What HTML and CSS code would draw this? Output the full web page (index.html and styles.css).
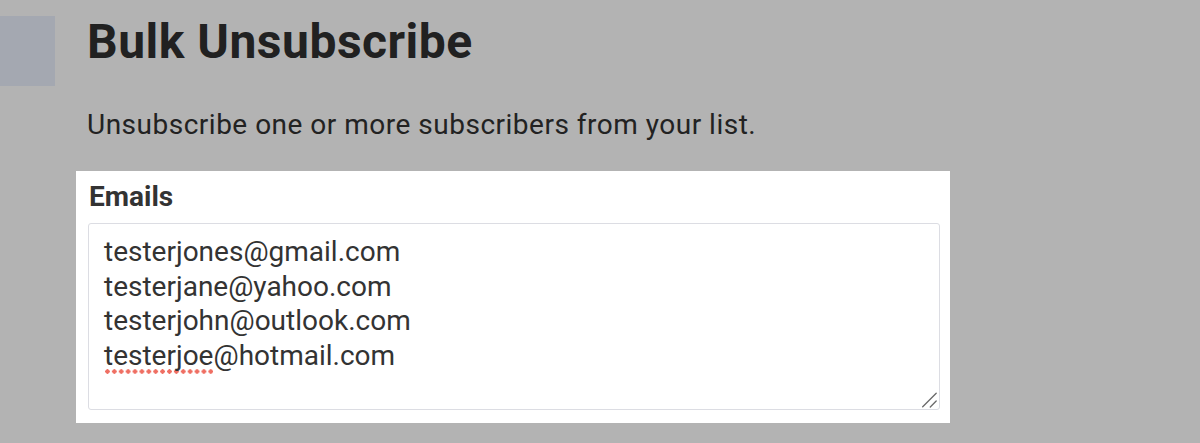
FILE: index.html
```html
<!DOCTYPE html>
<html>
<head>
<meta charset="utf-8">
<link rel="stylesheet" href="styles.css">
</head>
<body>
<div class="page">
  <div class="side"><div class="side-block"></div></div>
  <div class="main">
    <h1 class="title">Bulk Unsubscribe</h1>
    <p class="subtitle">Unsubscribe one or more subscribers from your list.</p>
    <div class="card">
      <label class="label">Emails</label>
      <div class="textarea">
        <div class="line">testerjones@gmail.com</div>
        <div class="line">testerjane@yahoo.com</div>
        <div class="line">testerjohn@outlook.com</div>
        <div class="line"><span class="misspelled">testerjoe</span>@hotmail.com</div>
        <svg class="grip" width="16" height="17" viewBox="0 0 16 17"><path d="M1.7 15.7 L15.2 2.3 M9.3 16 L15.2 10" stroke="#6a6a6a" stroke-width="1.3" stroke-linecap="round"/></svg>
      </div>
    </div>
  </div>
</div>
</body>
</html>
```

FILE: styles.css
```css
html, body {
  margin: 0;
  padding: 0;
  background: #b3b3b3;
  font-family: Roboto, "Liberation Sans", sans-serif;
}
.page {
  display: flex;
  align-items: flex-start;
}
.side {
  width: 55px;
  flex: none;
  padding-top: 16px;
}
.side-block {
  height: 70px;
  background: #a4a8b1;
}
.main {
  margin-left: 21px;
  width: 874px;
}
.title {
  margin: 0;
  padding: 14px 0 0 11px;
  font-size: 48px;
  line-height: 56px;
  font-weight: 700;
  letter-spacing: 0.5px;
  color: #212121;
}
.subtitle {
  margin: 0;
  padding: 38px 0 0 11px;
  font-size: 28px;
  line-height: 34px;
  letter-spacing: 0.5px;
  color: #222;
}
.card {
  margin-top: 29px;
  background: #fff;
  padding: 10px 10px 13px 12px;
}
.label {
  display: block;
  font-size: 28px;
  line-height: 32px;
  font-weight: 700;
  color: #333;
  margin-left: 1px;
  margin-bottom: 10px;
}
.textarea {
  position: relative;
  border: 1px solid #dcdde3;
  border-radius: 3px;
  height: 187px;
  box-sizing: border-box;
  padding: 11px 15px;
  font-size: 28px;
  line-height: 34.7px;
  color: #333;
}
.misspelled {
  background-image: radial-gradient(circle, #ef6f63 2px, transparent 2.4px);
  background-size: 6.9px 5px;
  background-repeat: repeat-x;
  background-position: 0 100%;
  padding-bottom: 2px;
}
.grip {
  position: absolute;
  right: 2px;
  bottom: 1px;
}
```
